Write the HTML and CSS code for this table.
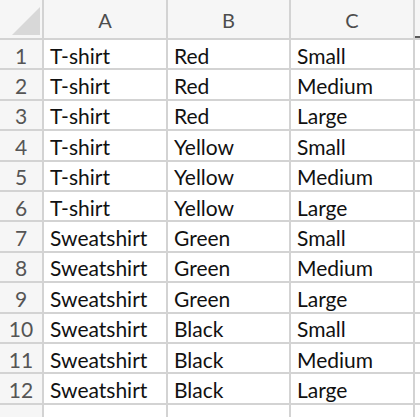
FILE: index.html
```html
<!DOCTYPE html>
<html>
<head>
<meta charset="utf-8">
<link rel="stylesheet" href="styles.css">
</head>
<body>
<div class="sheet">
  <div class="corner"><span class="tri"></span></div>
  <div class="colhead">A</div>
  <div class="colhead">B</div>
  <div class="colhead">C</div>
  <div class="colhead last"><span class="selmark"></span></div>

  <div class="rowhead">1</div><div class="cell">T-shirt</div><div class="cell">Red</div><div class="cell">Small</div><div class="cell extra"></div>
  <div class="rowhead">2</div><div class="cell">T-shirt</div><div class="cell">Red</div><div class="cell">Medium</div><div class="cell extra"></div>
  <div class="rowhead">3</div><div class="cell">T-shirt</div><div class="cell">Red</div><div class="cell">Large</div><div class="cell extra"></div>
  <div class="rowhead">4</div><div class="cell">T-shirt</div><div class="cell">Yellow</div><div class="cell">Small</div><div class="cell extra"></div>
  <div class="rowhead">5</div><div class="cell">T-shirt</div><div class="cell">Yellow</div><div class="cell">Medium</div><div class="cell extra"></div>
  <div class="rowhead">6</div><div class="cell">T-shirt</div><div class="cell">Yellow</div><div class="cell">Large</div><div class="cell extra"></div>
  <div class="rowhead">7</div><div class="cell">Sweatshirt</div><div class="cell">Green</div><div class="cell">Small</div><div class="cell extra"></div>
  <div class="rowhead">8</div><div class="cell">Sweatshirt</div><div class="cell">Green</div><div class="cell">Medium</div><div class="cell extra"></div>
  <div class="rowhead">9</div><div class="cell">Sweatshirt</div><div class="cell">Green</div><div class="cell">Large</div><div class="cell extra"></div>
  <div class="rowhead">10</div><div class="cell">Sweatshirt</div><div class="cell">Black</div><div class="cell">Small</div><div class="cell extra"></div>
  <div class="rowhead">11</div><div class="cell">Sweatshirt</div><div class="cell">Black</div><div class="cell">Medium</div><div class="cell extra"></div>
  <div class="rowhead">12</div><div class="cell">Sweatshirt</div><div class="cell">Black</div><div class="cell">Large</div><div class="cell extra"></div>

  <div class="rowhead tail"></div><div class="cell tail"></div><div class="cell tail"></div><div class="cell tail"></div><div class="cell tail extra"></div>
</div>
</body>
</html>
```
FILE: styles.css
```css
html, body {
  margin: 0;
  padding: 0;
  background: #ffffff;
}
.sheet {
  width: 420px;
  height: 417px;
  overflow: hidden;
  display: grid;
  grid-template-columns: 44px 124px 123px 124px 1fr;
  grid-template-rows: 40px repeat(12, 30.4px) 1fr;
  font-family: Lato, "Liberation Sans", sans-serif;
  font-size: 21px;
  color: #111;
}
.sheet > div {
  box-sizing: border-box;
  border-right: 2px solid #d3d3d3;
  border-bottom: 2px solid #d3d3d3;
  display: flex;
  align-items: center;
  min-width: 0;
  overflow: hidden;
  white-space: nowrap;
  padding-top: 2px;
}
.corner {
  background: #f6f6f6;
  position: relative;
}
.tri {
  position: absolute;
  left: 12px;
  top: 7px;
  width: 28px;
  height: 28px;
  background: #d8d8d8;
  clip-path: polygon(100% 0, 100% 100%, 0 100%);
}
.colhead {
  background: #f6f6f6;
  justify-content: center;
  color: #4d4d4d;
  font-size: 20px;
  position: relative;
}
.colhead.last {
  border-right: none;
}
.selmark {
  position: absolute;
  left: 0;
  bottom: -2px;
  width: 8px;
  height: 4px;
  background: #5a5a5a;
}
.rowhead {
  background: #f6f6f6;
  justify-content: center;
  color: #555;
}
.cell {
  padding-left: 6px;
}
.cell.extra {
  border-right: none;
}
.tail {
  border-bottom: none !important;
}
.rowhead.tail {
  background: #f6f6f6;
}
```
